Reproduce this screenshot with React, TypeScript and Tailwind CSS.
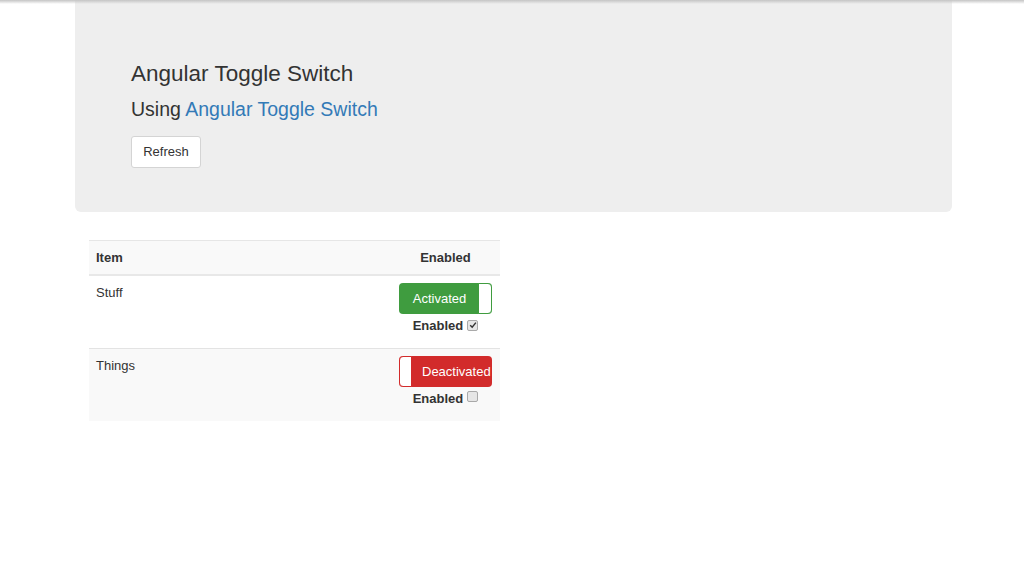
import React from 'react'

type Row = { name: string; on: boolean }

const rows: Row[] = [
  { name: 'Stuff', on: true },
  { name: 'Things', on: false },
]

function Toggle({ on }: { on: boolean }) {
  // 开关：绿色在左、手柄在右；红色时相反
  if (on) {
    return (
      <div className="flex h-[31px] w-[93px] overflow-hidden rounded-[4px] bg-[#3f9c3f]">
        <div className="flex flex-1 items-center justify-center pl-[2px] text-[13px] text-white">Activated</div>
        <div className="w-[14px] rounded-r-[4px] border border-[#3f9c3f] bg-white" />
      </div>
    )
  }
  return (
    <div className="flex h-[31px] w-[93px] overflow-hidden rounded-[4px] bg-[#d22b2b]">
      <div className="w-[13px] shrink-0 rounded-l-[4px] border border-[#d22b2b] bg-white" />
      <div className="flex flex-1 items-center whitespace-nowrap pl-[10px] text-[13px] text-white">Deactivated</div>
    </div>
  )
}

function Check({ on }: { on: boolean }) {
  return (
    <span className="ml-[4px] inline-flex h-[11px] w-[11px] items-center justify-center rounded-[2px] border border-[#a9a9a9] bg-[#e6e6e6] align-[1px]">
      {on && (
        <svg viewBox="0 0 10 10" className="h-[8px] w-[8px]">
          <path d="M1.5 5.2 L4 7.8 L8.6 2" fill="none" stroke="#333" strokeWidth="1.8" />
        </svg>
      )}
    </span>
  )
}

export default function App() {
  return (
    <div className="relative min-h-[574px] bg-white text-[#333]" style={{ fontFamily: '"Liberation Sans", Arial, sans-serif' }}>
      <div className="pointer-events-none absolute inset-x-0 top-0 h-[4px] bg-gradient-to-b from-[#c4c4c4] to-transparent" />

      <div className="ml-[75px] w-[877px]">
        {/* jumbotron */}
        <div className="rounded-b-[6px] bg-[#eeeeee] pb-[44px] pl-[56px] pt-[61px]">
          <h3 className="text-[22.5px] leading-[26px]">Angular Toggle Switch</h3>
          <h4 className="mt-[11px] text-[19.5px] leading-[22px]">
            Using <a className="text-[#337ab7]" href="#">Angular Toggle Switch</a>
          </h4>
          <button className="mt-[16px] h-[32px] w-[70px] rounded-[3px] border border-[#d4d4d4] bg-white text-[13px] text-[#333]">
            Refresh
          </button>
        </div>

        {/* 表格 */}
        <div className="px-[14px] pt-[28px]">
          <table className="w-[411px] border-collapse text-[13px]">
            <thead>
              <tr className="border-t border-[#e6e6e6] bg-[#f9f9f9]">
                <th className="border-b-2 border-[#e8e8e8] px-[7px] py-[8px] text-left font-bold leading-[17px]">Item</th>
                <th className="w-[109px] border-b-2 border-[#e8e8e8] px-[8px] py-[8px] text-center font-bold leading-[17px]">Enabled</th>
              </tr>
            </thead>
            <tbody>
              {rows.map((r, i) => (
                <tr key={r.name} className={`${i % 2 === 1 ? 'bg-[#f9f9f9]' : 'bg-white'} ${i > 0 ? 'border-t border-[#e3e3e3]' : ''}`}>
                  <td className="px-[7px] pt-[8px] align-top leading-[17px]">{r.name}</td>
                  <td className="px-[8px] pb-[13px] pt-[7px] align-top">
                    <Toggle on={r.on} />
                    <div className="mt-[3px] text-center font-bold leading-[18px]">
                      Enabled
                      <Check on={r.on} />
                    </div>
                  </td>
                </tr>
              ))}
            </tbody>
          </table>
        </div>
      </div>
    </div>
  )
}
